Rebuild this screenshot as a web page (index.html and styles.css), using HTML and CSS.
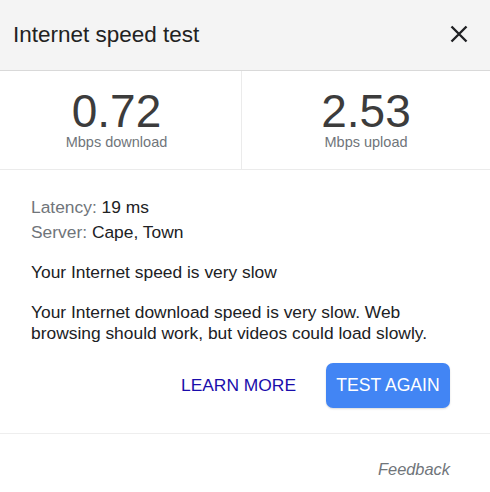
FILE: index.html
```html
<!DOCTYPE html>
<html>
<head>
<meta charset="utf-8">
<link rel="stylesheet" href="styles.css">
</head>
<body>
<div class="card">
  <div class="header">
    <div class="title">Internet speed test</div>
    <div class="close">
      <svg width="18" height="18" viewBox="0 0 18 18"><path d="M1.5 1.5 L16.5 16.5 M16.5 1.5 L1.5 16.5" stroke="#202124" stroke-width="2.4" fill="none"/></svg>
    </div>
  </div>
  <div class="stats">
    <div class="stat">
      <div class="num">0.72</div>
      <div class="unit">Mbps download</div>
    </div>
    <div class="stat">
      <div class="num">2.53</div>
      <div class="unit">Mbps upload</div>
    </div>
  </div>
  <div class="body">
    <div class="info"><span class="label">Latency:</span> 19 ms</div>
    <div class="info"><span class="label">Server:</span> Cape, Town</div>
    <div class="verdict">Your Internet speed is very slow</div>
    <div class="desc">Your Internet download speed is very slow. Web browsing should work, but videos could load slowly.</div>
    <div class="actions">
      <a class="learn">LEARN MORE</a>
      <button class="again">TEST AGAIN</button>
    </div>
  </div>
  <div class="footer">
    <span class="feedback">Feedback</span>
  </div>
</div>
</body>
</html>
```
FILE: styles.css
```css
* { box-sizing: border-box; }
html, body { margin: 0; padding: 0; background: #fff; }
body { font-family: "Liberation Sans", Arial, sans-serif; color: #202124; }
.card { width: 490px; height: 492px; display: flex; flex-direction: column; }
.header {
  height: 71px;
  background: #f4f4f4;
  border-bottom: 1px solid #d9d9d9;
  display: flex;
  align-items: center;
  justify-content: space-between;
  padding: 0 22px 0 13px;
}
.title { font-size: 22.5px; color: #222; }
.close { display: flex; padding-bottom: 2px; }
.stats {
  display: grid;
  grid-template-columns: 242px 1fr;
  height: 99px;
  border-bottom: 1px solid #ebebeb;
}
.stat {
  display: flex;
  flex-direction: column;
  align-items: center;
  padding-top: 20px;
}
.stat:first-child { border-right: 1px solid #ebebeb; padding-right: 8px; }
.num { font-size: 46px; line-height: 40px; color: #3c3c3c; }
.unit { font-size: 14.5px; line-height: 17px; color: #70757a; margin-top: 3px; }
.body { padding: 25px 60px 0 31px; font-size: 17.4px; }
.info { line-height: 25px; color: #202124; }
.label { color: #70757a; }
.verdict { margin-top: 17px; line-height: 20px; }
.desc { margin-top: 20px; line-height: 21px; }
.actions {
  display: flex;
  justify-content: flex-end;
  align-items: center;
  gap: 30px;
  margin-top: 19px;
  margin-right: -20px;
  padding-bottom: 25px;
}
.learn { color: #1a0dab; font-size: 17.4px; }
.again {
  font-family: inherit;
  font-size: 17.6px;
  color: #fff;
  background: #4285f4;
  border: none;
  border-radius: 7px;
  width: 124px;
  height: 45px;
  padding: 0;
  box-shadow: 0 1px 2px rgba(0,0,0,0.15);
}
.footer {
  border-top: 1px solid #eeeeee;
  display: flex;
  justify-content: flex-end;
  padding: 26px 40px 0 0;
}
.feedback { font-style: italic; color: #70757a; font-size: 16.4px; }
```
